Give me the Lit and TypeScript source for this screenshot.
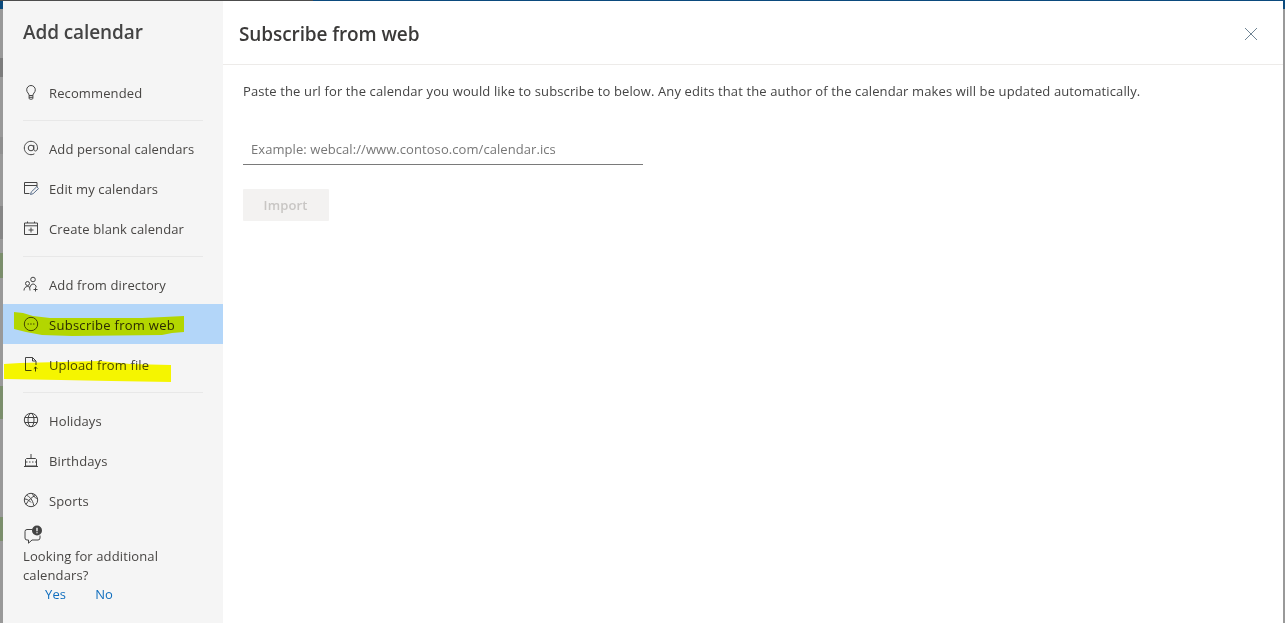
import { LitElement, html, css, svg } from "lit";
import { customElement } from "lit/decorators.js";

const icons: Record<string, unknown> = {
  bulb: svg`<path d="M8 1.500a4.300 4.300 0 0 0-4.300 4.300c0 1.300.5 2.300 1.300 3.200.6.7 1 1.400 1.100 2.500h3.800c.1-1.100.5-1.800 1.100-2.500.8-.9 1.300-1.900 1.300-3.200A4.300 4.300 0 0 0 8 1.500Z"/><path d="M6.100 11.500v2.700c0 .6.4 1 1 1h1.800c.6 0 1-.4 1-1v-2.700M6.100 13.300h3.800"/>`,
  at: svg`<circle cx="8" cy="8" r="2.800"/><path d="M10.800 5v4.200c0 1.100.8 1.800 1.700 1.800 1.200 0 2-1.300 2-3.200C14.500 4.200 11.700 1.300 8 1.300S1.300 4.300 1.300 8 4.300 14.700 8 14.700c1.300 0 2.400-.3 3.400-.9"/>`,
  edit: svg`<path d="M6.500 13.500H1.500V2.500h12.500v4.500M1.500 5.500H14"/><path d="M7.500 14.500l.8-2.600 5.400-5.100 1.800 1.800-5.400 5.100Z" stroke="#5a6f8c"/>`,
  cal: svg`<path d="M1.500 3h13v11.500h-13ZM1.500 5.800h13M4.500 1.500V3M11.500 1.500V3M8 7.500v5M5.500 10h5"/>`,
  people: svg`<circle cx="10" cy="3.500" r="2.300"/><circle cx="4.500" cy="7.500" r="2"/><path d="M1 14.500c0-2.500 1.500-4 3.500-4 1 0 1.800.3 2.500 1 .4-2 1.500-3.500 3-3.500 1.700 0 3 1.400 3.300 3.300M7 14.500c0-1-.1-2-.5-3M12.500 11.500v4M10.500 13.500h4"/>`,
  sub: svg`<circle cx="8" cy="8" r="6.700"/><path d="M4.500 8h1.500M7.200 8h1.500M10 8h1.500"/>`,
  doc: svg`<path d="M8.500 14.500H2.500v-13h7l3.500 3.500v4M9.500 1.500V5H13"/><path d="M12.500 15.500v-4.500M10.800 12.700l1.700-1.700 1.700 1.700" stroke="#3a3a3a"/>`,
  globe: svg`<circle cx="8" cy="8" r="6.700"/><ellipse cx="8" cy="8" rx="3" ry="6.700"/><path d="M1.800 5.500h12.400M1.800 10.500h12.400"/>`,
  cake: svg`<path d="M8 2v4M3.500 6.500h9l1 1v6.500h-11V7.500ZM1 14.500h14M2.500 10h2M6 10h1.500M9 10h1.500M12 10h1.500"/>`,
  ball: svg`<circle cx="8" cy="8" r="6.700"/><path d="M3.300 3.300c3 .8 6.500 4.500 7.500 10.400M12.700 3.300C9 4.800 5 8.500 3 12.500M1.500 7c2 0 4.500 1 6.500 3.500M9.500 1.500c.5 2.500 2.500 4.500 5 5"/>`,
};

const rows1 = [["at", "Add personal calendars"], ["edit", "Edit my calendars"], ["cal", "Create blank calendar"]];
const rows2 = [["people", "Add from directory"], ["sub", "Subscribe from web"], ["doc", "Upload from file"]];
const rows3 = [["globe", "Holidays"], ["cake", "Birthdays"], ["ball", "Sports"]];

@customElement("app-root")
export class AppRoot extends LitElement {
  static styles = css`
    :host {
      display: block;
      position: relative;
      height: 623px;
      overflow: hidden;
      background: #999;
      font-family: "Open Sans", "Liberation Sans", sans-serif;
      font-size: 13px;
      letter-spacing: 0.12px;
      color: #484644;
    }
    .top {
      height: 1px;
      background: linear-gradient(to right, #4c4c4c 313px, #0b4a7d 313px);
    }
    .frame {
      display: flex;
      height: 622px;
    }
    .rail {
      width: 3px;
      flex: none;
    }
    .rail.left {
      background: linear-gradient(
        to bottom,
        #0b4a7d 0 8px,
        #999 8px 57px,
        #7c7c7c 57px 76px,
        #999 76px 136px,
        #8f8f8f 136px 153px,
        #999 153px 205px,
        #868686 205px 238px,
        #999 238px 252px,
        #7b8e6c 252px 277px,
        #999 277px 385px,
        #7b8e6c 385px 418px,
        #999 418px 516px,
        #7b8e6c 516px 540px,
        #999 540px
      );
    }
    .rail.right {
      width: 2px;
      background: linear-gradient(to bottom, #0b4a7d 0 8px, #999 8px);
    }
    .side {
      width: 220px;
      flex: none;
      background: #f5f5f5;
      display: flex;
      flex-direction: column;
    }
    .side h1 {
      margin: 0;
      padding: 19px 0 0 20px;
      height: 71px;
      box-sizing: border-box;
      font-size: 19px;
      line-height: 25px;
      font-weight: 600;
      color: #444;
      letter-spacing: -0.1px;
    }
    .row {
      display: flex;
      align-items: center;
      gap: 10px;
      height: 40px;
      padding: 2px 0 0 20px;
      box-sizing: border-box;
      line-height: 18px;
    }
    .row.active {
      background: #b3d6f9;
      color: #2b2b2b;
      letter-spacing: 0.28px;
    }
    .row svg {
      width: 16px;
      height: 16px;
      flex: none;
      margin-top: -2px;
      fill: none;
      stroke: #444;
      stroke-width: 1;
    }
    hr {
      margin: 8px 20px 7px;
      border: 0;
      height: 1px;
      background: #e8e8e8;
    }
    .foot {
      padding: 5px 0 0 20px;
      line-height: 19px;
    }
    .foot svg {
      display: block;
      width: 20px;
      height: 20px;
      margin-bottom: 2px;
    }
    .foot p {
      margin: 0;
      width: 150px;
    }
    .links {
      display: flex;
      gap: 29px;
      padding-left: 22px;
      color: #106ebe;
    }
    .main {
      flex: 1;
      background: #fff;
      min-width: 0;
    }
    .head {
      display: flex;
      align-items: center;
      justify-content: space-between;
      height: 64px;
      padding: 2px 25px 0 16px;
      box-sizing: border-box;
      border-bottom: 1px solid #edebe9;
    }
    .head h2 {
      margin: 0;
      font-size: 19px;
      font-weight: 600;
      color: #3b3a39;
      letter-spacing: -0.1px;
    }
    .head svg {
      width: 14px;
      height: 14px;
      fill: none;
      stroke: #6f8494;
      stroke-width: 1;
    }
    .body {
      padding: 17px 20px 0;
    }
    .body p {
      margin: 0;
      line-height: 18px;
      white-space: nowrap;
      color: #444;
    }
    .field {
      width: 400px;
      height: 31px;
      margin-top: 34px;
      padding: 0 8px 1px;
      box-sizing: border-box;
      display: flex;
      align-items: center;
      border-bottom: 1px solid #7a7a7a;
      color: #777;
      letter-spacing: 0.07px;
    }
    .btn {
      width: 86px;
      height: 32px;
      margin-top: 24px;
      box-sizing: border-box;
      padding-right: 1px;
      display: flex;
      align-items: center;
      justify-content: center;
      background: #f3f2f1;
      color: #c8c6c4;
      font-weight: 600;
      border-radius: 1px;
    }
    .marker {
      position: absolute;
      inset: 0;
      width: 1285px;
      height: 623px;
      pointer-events: none;
      mix-blend-mode: multiply;
      fill: #ffff00;
    }
  `;

  private row(item: string[], active = false) {
    return html`<div class="row ${active ? "active" : ""}">
      <svg viewBox="0 0 16 16">${icons[item[0]]}</svg><span>${item[1]}</span>
    </div>`;
  }

  render() {
    return html`
      <div class="top"></div>
      <div class="frame">
        <div class="rail left"></div>
        <aside class="side">
          <h1>Add calendar</h1>
          ${this.row(["bulb", "Recommended"])}
          <hr />
          ${rows1.map((r) => this.row(r))}
          <hr />
          ${rows2.map((r, i) => this.row(r, i === 1))}
          <hr />
          ${rows3.map((r) => this.row(r))}
          <div class="foot">
            <svg viewBox="0 0 20 20" fill="none" stroke="#444">
              <path d="M9.500 4.500H4a2 2 0 0 0-2 2V13a2 2 0 0 0 2 2h1.500v3.200L9 15h6a2 2 0 0 0 2-2v-2.500" />
              <circle cx="14" cy="5.500" r="5" fill="#444" stroke="none" />
              <path d="M14 2.800v3.400M14 7.200v1" stroke="#fff" stroke-width="1.300" />
            </svg>
            <p>Looking for additional calendars?</p>
            <div class="links"><span>Yes</span><span>No</span></div>
          </div>
        </aside>
        <section class="main">
          <header class="head">
            <h2>Subscribe from web</h2>
            <svg viewBox="0 0 14 14"><path d="M1 1l12 12M13 1L1 13" /></svg>
          </header>
          <div class="body">
            <p>
              Paste the url for the calendar you would like to subscribe to below. Any edits that the
              author of the calendar makes will be updated automatically.
            </p>
            <div class="field">Example: webcal://www.contoso.com/calendar.ics</div>
            <div class="btn">Import</div>
          </div>
        </section>
        <div class="rail right"></div>
      </div>
      <svg class="marker" viewBox="0 0 1285 623">
        <path d="M14 312l9 1 10 3 17 2 92 0 22-1 20-1v16l-12 1-10 2-90 1-30-1-16-3-12-3Z" />
        <path d="M4 364l16-1 40-1 40-1 30 3 41 1v17l-60-1-50-1-57-1Z" />
      </svg>
    `;
  }
}
